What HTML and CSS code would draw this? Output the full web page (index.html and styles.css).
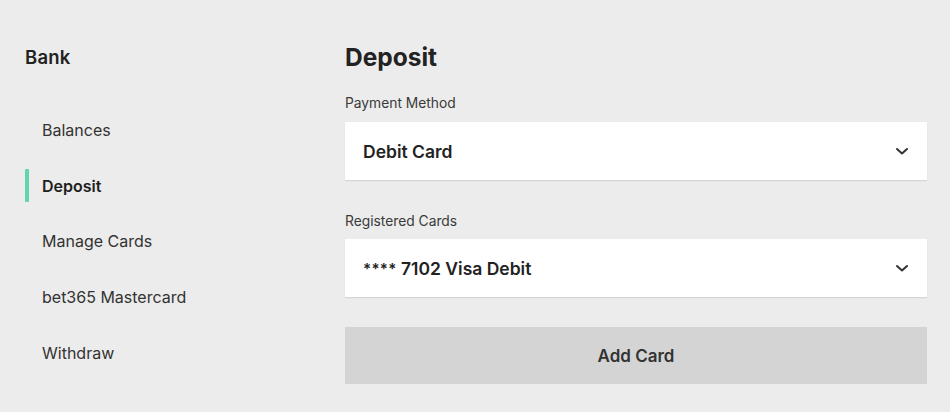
FILE: index.html
```html
<!DOCTYPE html>
<html>
<head>
<meta charset="utf-8">
<link rel="stylesheet" href="styles.css">
</head>
<body>
<div class="page">
  <aside class="sidebar">
    <div class="side-title">Bank</div>
    <nav class="nav">
      <div class="nav-item">Balances</div>
      <div class="nav-item active">Deposit</div>
      <div class="nav-item">Manage Cards</div>
      <div class="nav-item">bet365 Mastercard</div>
      <div class="nav-item">Withdraw</div>
    </nav>
  </aside>
  <main class="main">
    <h1 class="heading">Deposit</h1>
    <div class="label">Payment Method</div>
    <div class="select">
      <span class="select-text">Debit Card</span>
      <svg class="chev" width="14" height="9" viewBox="0 0 14 9"><path d="M2 2 L7 6.5 L12 2" fill="none" stroke="#333" stroke-width="2" stroke-linecap="round" stroke-linejoin="round"/></svg>
    </div>
    <div class="label label2">Registered Cards</div>
    <div class="select">
      <span class="select-text"><span class="stars">****</span> 7102 Visa Debit</span>
      <svg class="chev" width="14" height="9" viewBox="0 0 14 9"><path d="M2 2 L7 6.5 L12 2" fill="none" stroke="#333" stroke-width="2" stroke-linecap="round" stroke-linejoin="round"/></svg>
    </div>
    <div class="button">Add Card</div>
  </main>
</div>
</body>
</html>
```

FILE: styles.css
```css
* { box-sizing: border-box; }
html, body { margin: 0; padding: 0; }
body {
  background: #ebeceb;
  font-family: Inter, "Liberation Sans", sans-serif;
  color: #222;
  width: 950px;
  height: 412px;
  overflow: hidden;
}
.page {
  display: flex;
}
.sidebar {
  width: 345px;
  padding-left: 25px;
  padding-top: 45px;
}
.side-title {
  font-size: 18.5px;
  line-height: 24px;
  font-weight: 600;
  letter-spacing: 0.2px;
  color: #222;
}
.nav {
  margin-top: 33px;
  display: flex;
  flex-direction: column;
}
.nav-item {
  height: 55.75px;
  display: flex;
  align-items: center;
  font-size: 16px;
  color: #333;
}
.nav-item::before {
  content: "";
  width: 4px;
  height: 33px;
  border-radius: 1px;
  margin-right: 13px;
  background: transparent;
}
.nav-item.active {
  font-weight: 600;
  color: #1e1e1e;
}
.nav-item.active::before {
  background: #62d5b0;
}
.main {
  width: 582px;
  padding-top: 43px;
  display: flex;
  flex-direction: column;
}
.heading {
  margin: 0;
  font-size: 24.5px;
  line-height: 28px;
  font-weight: 700;
  color: #222;
}
.label {
  margin-top: 23px;
  font-size: 13.8px;
  line-height: 18px;
  color: #3a3a3a;
}
.label2 {
  margin-top: 32px;
}
.select {
  margin-top: 10px;
  height: 58px;
  background: #fff;
  box-shadow: 0 1px 1px rgba(0,0,0,0.10);
  display: flex;
  align-items: center;
  justify-content: space-between;
  padding: 0 18px;
}
.label2 + .select {
  margin-top: 9px;
}
.select-text {
  font-size: 17.5px;
  font-weight: 600;
  color: #222;
}
.stars {
  font-size: 15px;
  letter-spacing: 0.3px;
  vertical-align: 1px;
}
.chev {
  margin-right: 0;
}
.button {
  margin-top: 30px;
  height: 57px;
  background: #d3d4d3;
  display: flex;
  align-items: center;
  justify-content: center;
  font-size: 17px;
  font-weight: 600;
  color: #333;
}
```
